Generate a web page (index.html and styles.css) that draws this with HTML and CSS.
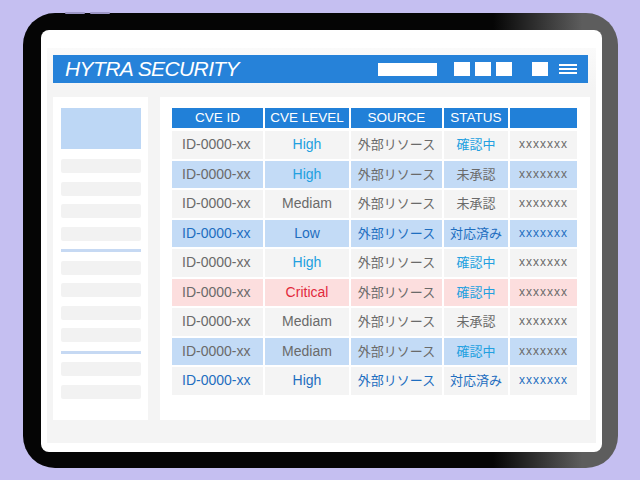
FILE: index.html
```html
<!DOCTYPE html>
<html lang="ja">
<head>
  <meta charset="UTF-8" />
  <title>HYTRA SECURITY</title>
  <link rel="stylesheet" href="styles.css">
</head>
<body>
  <div class="tablet">
    <span class="key key-a"></span>
    <span class="key key-b"></span>
    <div class="screen">
      <div class="desk">
        <div class="topbar">
          <div class="brand">HYTRA SECURITY</div>
          <div class="tools">
            <span class="search"></span>
            <span class="sq"></span>
            <span class="sq"></span>
            <span class="sq"></span>
            <span class="sq sq-gap"></span>
            <span class="burger"><i></i><i></i><i></i></span>
          </div>
        </div>

        <div class="panels">
          <div class="side">
            <div class="side-hero"></div>
            <div class="side-bar"></div>
            <div class="side-bar"></div>
            <div class="side-bar"></div>
            <div class="side-bar"></div>
            <div class="side-rule"></div>
            <div class="side-bar"></div>
            <div class="side-bar"></div>
            <div class="side-bar"></div>
            <div class="side-bar"></div>
            <div class="side-rule"></div>
            <div class="side-bar"></div>
            <div class="side-bar"></div>
          </div>

          <div class="content">
            <div class="thead">
              <div>CVE ID</div>
              <div>CVE LEVEL</div>
              <div>SOURCE</div>
              <div>STATUS</div>
              <div></div>
            </div>
            <div class="tbody">
              <div class="row grey">
                <div class="id">ID-0000-xx</div><div class="cyan">High</div><div class="jp">外部リソース</div><div class="jp cyan">確認中</div><div class="xs">xxxxxxx</div>
              </div>
              <div class="row blue">
                <div class="id">ID-0000-xx</div><div class="cyan">High</div><div class="jp">外部リソース</div><div class="jp">未承認</div><div class="xs">xxxxxxx</div>
              </div>
              <div class="row grey">
                <div class="id">ID-0000-xx</div><div>Mediam</div><div class="jp">外部リソース</div><div class="jp">未承認</div><div class="xs">xxxxxxx</div>
              </div>
              <div class="row blue navy">
                <div class="id">ID-0000-xx</div><div>Low</div><div class="jp">外部リソース</div><div class="jp">対応済み</div><div class="xs">xxxxxxx</div>
              </div>
              <div class="row grey">
                <div class="id">ID-0000-xx</div><div class="cyan">High</div><div class="jp">外部リソース</div><div class="jp cyan">確認中</div><div class="xs">xxxxxxx</div>
              </div>
              <div class="row pink">
                <div class="id">ID-0000-xx</div><div class="red">Critical</div><div class="jp">外部リソース</div><div class="jp cyan">確認中</div><div class="xs">xxxxxxx</div>
              </div>
              <div class="row grey">
                <div class="id">ID-0000-xx</div><div>Mediam</div><div class="jp">外部リソース</div><div class="jp">未承認</div><div class="xs">xxxxxxx</div>
              </div>
              <div class="row blue">
                <div class="id">ID-0000-xx</div><div>Mediam</div><div class="jp">外部リソース</div><div class="jp cyan">確認中</div><div class="xs">xxxxxxx</div>
              </div>
              <div class="row grey navy">
                <div class="id">ID-0000-xx</div><div>High</div><div class="jp">外部リソース</div><div class="jp">対応済み</div><div class="xs">xxxxxxx</div>
              </div>
            </div>
          </div>
        </div>
      </div>
    </div>
  </div>
</body>
</html>
```

FILE: styles.css
```css
body {
  margin: 0;
  width: 640px;
  height: 480px;
  overflow: hidden;
  background: #c5bff1;
  font-family: 'Liberation Sans', 'Noto Sans CJK JP', sans-serif;
}
.tablet {
  position: relative;
  box-sizing: border-box;
  width: 595px;
  height: 455px;
  margin: 13px 0 0 23px;
  padding: 17px 16px 16px 18px;
  border-radius: 32px;
  background: linear-gradient(to right, #050505 0%, #050505 79%, #5d5d5d 94%, #5d5d5d 100%);
}
.key {
  position: absolute;
  top: -1px;
  height: 2px;
  width: 20px;
  border-radius: 1px;
  background: #9d97c6;
}
.key-a { left: 42px; }
.key-b { left: 67px; }

.screen {
  height: 100%;
  box-sizing: border-box;
  background: #fff;
  border-radius: 8px;
  padding: 18px 6px 9px 6px;
}
.desk {
  height: 100%;
  box-sizing: border-box;
  background: linear-gradient(#fafafa, #f4f4f4 40px);
  padding: 7px 6px 0 6px;
}

.topbar {
  display: flex;
  align-items: center;
  justify-content: space-between;
  height: 28px;
  width: 535px;
  padding: 0 11px 0 12px;
  box-sizing: border-box;
  background: #2682d9;
}
.brand {
  color: #fff;
  font-style: italic;
  font-size: 21px;
  letter-spacing: -0.6px;
}
.tools {
  display: flex;
  align-items: center;
  gap: 5px;
}
.search {
  width: 59px;
  height: 13px;
  margin-right: 12px;
  background: #fff;
}
.sq {
  width: 16px;
  height: 14px;
  background: #fff;
}
.sq-gap {
  margin-left: 15px;
}
.burger {
  display: flex;
  flex-direction: column;
  gap: 2px;
  margin-left: 6px;
}
.burger i {
  display: block;
  width: 18px;
  height: 2px;
  background: #fff;
}

.panels {
  display: flex;
  gap: 12px;
  margin-top: 14px;
  height: 323px;
}
.side {
  width: 95px;
  box-sizing: border-box;
  background: #fff;
  padding: 11px 7px 0 8px;
  display: flex;
  flex-direction: column;
  gap: 8.5px;
}
.side-hero {
  height: 41px;
  background: #bdd7f5;
  margin-bottom: 1.5px;
}
.side-bar {
  height: 14px;
  background: #f2f2f2;
  border-radius: 2px;
}
.side-rule {
  height: 3px;
  background: #c6d9f3;
}

.content {
  width: 430px;
  box-sizing: border-box;
  background: #fff;
  padding: 11px 13px 0 12px;
}
.thead,
.row {
  display: grid;
  grid-template-columns: 91px 84px 91px 64px 67px;
  column-gap: 2px;
}
.thead {
  height: 20px;
  margin-bottom: 3px;
}
.thead div {
  background: #2180d8;
  color: #fff;
  font-size: 13.5px;
  text-align: center;
  line-height: 20px;
}
.tbody {
  display: grid;
  grid-auto-rows: 27.5px;
  row-gap: 2px;
}
.row div {
  font-size: 14px;
  color: #6a6a6a;
  text-align: center;
  line-height: 27.5px;
  white-space: nowrap;
}
.row .id {
  text-align: left;
  padding-left: 10px;
}
.row .jp {
  font-size: 13px;
}
.row .xs {
  font-size: 12px;
  letter-spacing: 1px;
}
.grey div { background: #f4f4f4; }
.blue div { background: #c3dbf6; }
.pink div { background: #fcdede; }

.row .cyan { color: #22a0e0; }
.row .red { color: #e2293c; }
.navy div { color: #1e6ec0; }
```
